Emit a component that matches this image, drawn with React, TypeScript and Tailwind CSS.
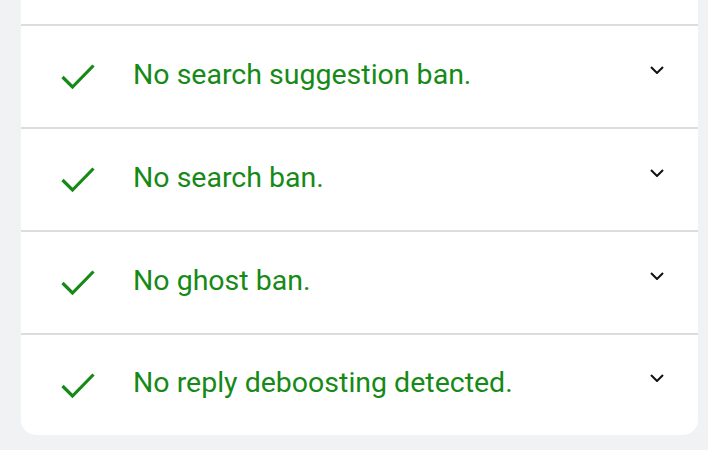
const rows = [
  "No search suggestion ban.",
  "No search ban.",
  "No ghost ban.",
  "No reply deboosting detected.",
];

const Check = () => (
  <svg width="34" height="26" viewBox="0 0 34 26" className="shrink-0">
    <polyline
      points="1.5,13 11.5,23 32.5,1.5"
      fill="none"
      stroke="#168a16"
      strokeWidth="3.2"
      strokeLinecap="butt"
      strokeLinejoin="miter"
    />
  </svg>
);

const Chevron = () => (
  <svg width="14" height="8" viewBox="0 0 14 8">
    <polyline
      points="1,1 7,7 13,1"
      fill="none"
      stroke="#111"
      strokeWidth="2"
    />
  </svg>
);

const App = () => {
  return (
    <div
      className="h-[450px] w-[708px] overflow-hidden bg-[#f1f2f4] pl-[21px] pr-[10px]"
      style={{ fontFamily: "Roboto, 'Noto Sans', sans-serif" }}
    >
      <div className="overflow-hidden rounded-b-[15px] bg-white">
        <div className="h-[26px] border-b-2 border-[#dcdcdc]" />
        {rows.map((text, i) => (
          <div
            key={text}
            className={
              i < rows.length - 1
                ? "flex h-[103px] items-center border-b-2 border-[#dcdcdc] pl-[40px] pr-[34px]"
                : "flex h-[100px] items-center pl-[40px] pr-[34px]"
            }
          >
            <div className="mt-[1px]">
              <Check />
            </div>
            <span className="ml-[38px] -mt-[3px] flex-1 text-[28.5px] leading-none text-[#168a16]">
              {text}
            </span>
            <div className="-mt-[14px]">
              <Chevron />
            </div>
          </div>
        ))}
      </div>
    </div>
  );
};

export default App;
